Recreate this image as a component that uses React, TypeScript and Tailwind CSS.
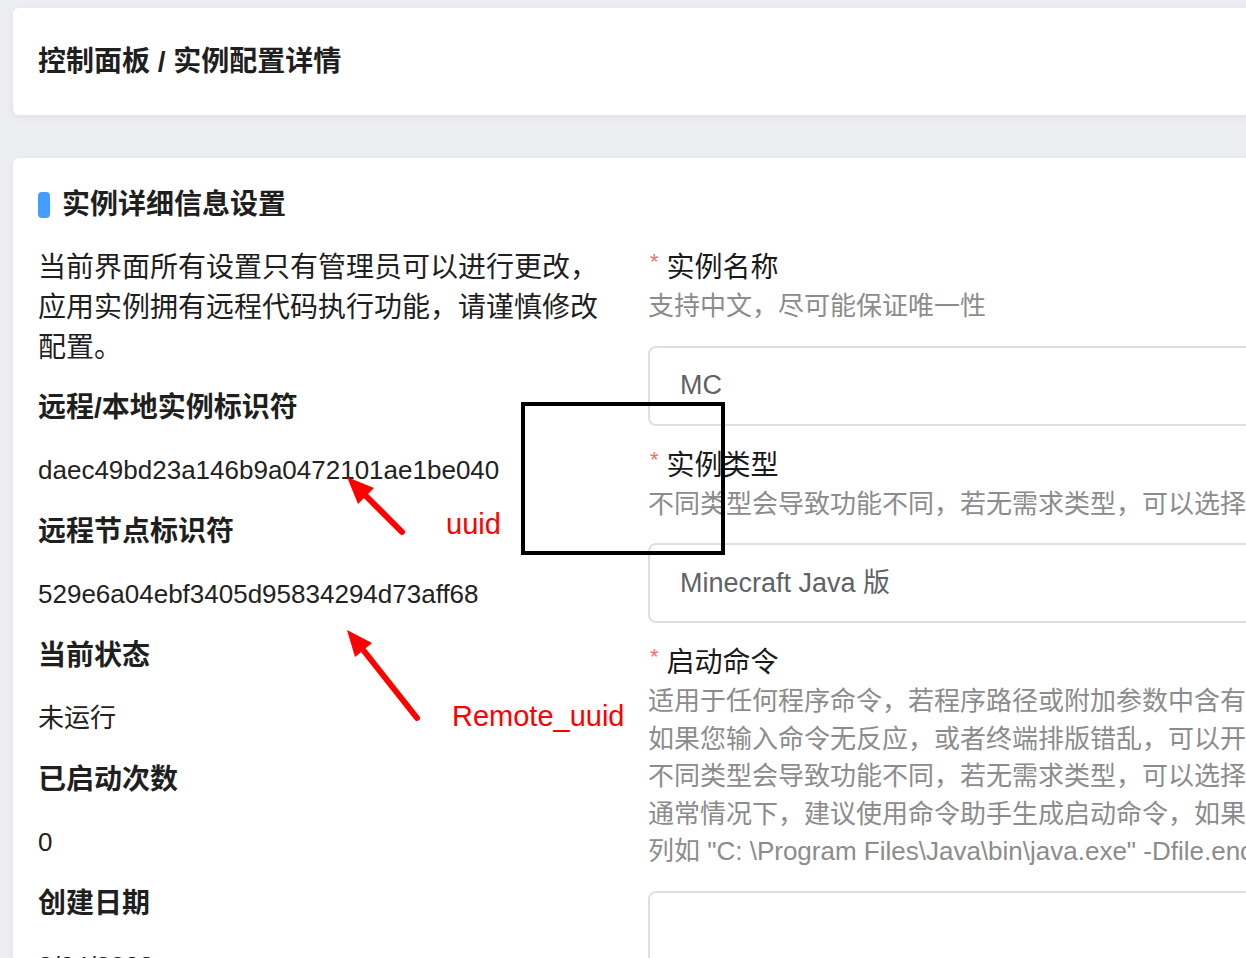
const font = { fontFamily: '"Liberation Sans", "Noto Sans CJK SC", sans-serif' };

const infoItems = [
  { label: "远程/本地实例标识符", value: "daec49bd23a146b9a0472101ae1be040" },
  { label: "远程节点标识符", value: "529e6a04ebf3405d95834294d73aff68" },
  { label: "当前状态", value: "未运行" },
  { label: "已启动次数", value: "0" },
  { label: "创建日期", value: "3/24/2023" },
];

function FormItem({
  label,
  desc,
  children,
}: {
  label: string;
  desc: string[];
  children: React.ReactNode;
}) {
  return (
    <div>
      <div className="flex h-[40px] items-center text-[28px] leading-[40px] text-[#1a1a1a] whitespace-nowrap">
        <span className="mr-[8px] -mt-[12px] ml-[2px] text-[22px] leading-none text-[#f56c6c]">*</span>
        {label}
      </div>
      {desc.map((d) => (
        <div key={d} className="text-[26px] leading-[37.5px] text-[#8c8c8c] whitespace-nowrap">
          {d}
        </div>
      ))}
      <div className="mt-[20px]">{children}</div>
    </div>
  );
}

export default function App() {
  return (
    <div
      className="relative h-[958px] w-[1246px] overflow-hidden bg-[#eceef2] pl-[13px] pt-[8px]"
      style={font}
    >
      {/* breadcrumb */}
      <div className="flex h-[107px] w-[1400px] items-center rounded-[6px] bg-white pl-[25px] shadow-[0_2px_8px_rgba(0,0,0,0.06)]">
        <h1 className="text-[28px] font-bold leading-[40px] text-[#1f1f1f]">控制面板 / 实例配置详情</h1>
      </div>

      {/* detail card */}
      <div className="mt-[43px] w-[1400px] rounded-[6px] bg-white pb-[40px] pl-[25px] pt-[31px] shadow-[0_2px_8px_rgba(0,0,0,0.06)]">
        <div className="flex h-[32px] items-center">
          <span className="mr-[12px] h-[26px] w-[12px] rounded-[4px] bg-[#409eff]" />
          <span className="text-[28px] font-bold leading-[32px] text-[#1f1f1f]">实例详细信息设置</span>
        </div>

        <div className="mt-[27px] flex gap-[38px]">
          {/* left column */}
          <div className="w-[572px] shrink-0">
            <p className="text-[28px] leading-[40px] text-[#1f1f1f]">
              当前界面所有设置只有管理员可以进行更改，应用实例拥有远程代码执行功能，请谨慎修改配置。
            </p>
            <div className="mt-[20px] flex flex-col gap-[22px]">
              {infoItems.map((item) => (
                <div key={item.label} className="flex flex-col gap-[22px]">
                  <div className="text-[28px] font-bold leading-[40px] text-[#1f1f1f]">{item.label}</div>
                  <div className="text-[26px] leading-[40px] text-[#222]">{item.value}</div>
                </div>
              ))}
            </div>
          </div>

          {/* right column */}
          <div className="flex-1">
            <div className="flex flex-col gap-[20px]">
              <FormItem label="实例名称" desc={["支持中文，尽可能保证唯一性"]}>
                <div className="flex h-[80px] items-center rounded-[8px] border-2 border-[#dcdfe6] pl-[30px] text-[27px] text-[#606266]">
                  MC
                </div>
              </FormItem>
              <FormItem
                label="实例类型"
                desc={["不同类型会导致功能不同，若无需求类型，可以选择通用控制台程序。"]}
              >
                <div className="flex h-[80px] items-center rounded-[8px] border-2 border-[#dcdfe6] pl-[30px] text-[27px] text-[#606266]">
                  Minecraft Java 版
                </div>
              </FormItem>
              <FormItem
                label="启动命令"
                desc={[
                  "适用于任何程序命令，若程序路径或附加参数中含有空格，请使用引号包裹。",
                  "如果您输入命令无反应，或者终端排版错乱，可以开启仿真终端。",
                  "不同类型会导致功能不同，若无需求类型，可以选择通用控制台程序。",
                  "通常情况下，建议使用命令助手生成启动命令，如果路径中有空格，",
                  '列如 "C: \\Program Files\\Java\\bin\\java.exe" -Dfile.encoding=UTF-8 -jar server.jar',
                ]}
              >
                <div className="h-[160px] rounded-[8px] border-2 border-[#dcdfe6]" />
              </FormItem>
            </div>
          </div>
        </div>
      </div>

      {/* annotations */}
      <div className="absolute left-[521px] top-[402px] h-[153px] w-[204px] border-[4px] border-black" />
      <svg className="pointer-events-none absolute left-0 top-0" width="1246" height="958">
        <line x1="402" y1="532" x2="366" y2="496" stroke="#ff0000" strokeWidth="6" strokeLinecap="round" />
        <polygon points="347,477 374,488 358,504" fill="#ff0000" />
        <line x1="417" y1="718" x2="364" y2="651" stroke="#ff0000" strokeWidth="6" strokeLinecap="round" />
        <polygon points="347,630 372,643 355,657" fill="#ff0000" />
      </svg>
      <div className="absolute left-[446px] top-[506px] text-[29px] leading-[36px] text-[#ff0000]">uuid</div>
      <div className="absolute left-[452px] top-[698px] text-[29px] leading-[36px] text-[#ff0000]">Remote_uuid</div>
    </div>
  );
}
